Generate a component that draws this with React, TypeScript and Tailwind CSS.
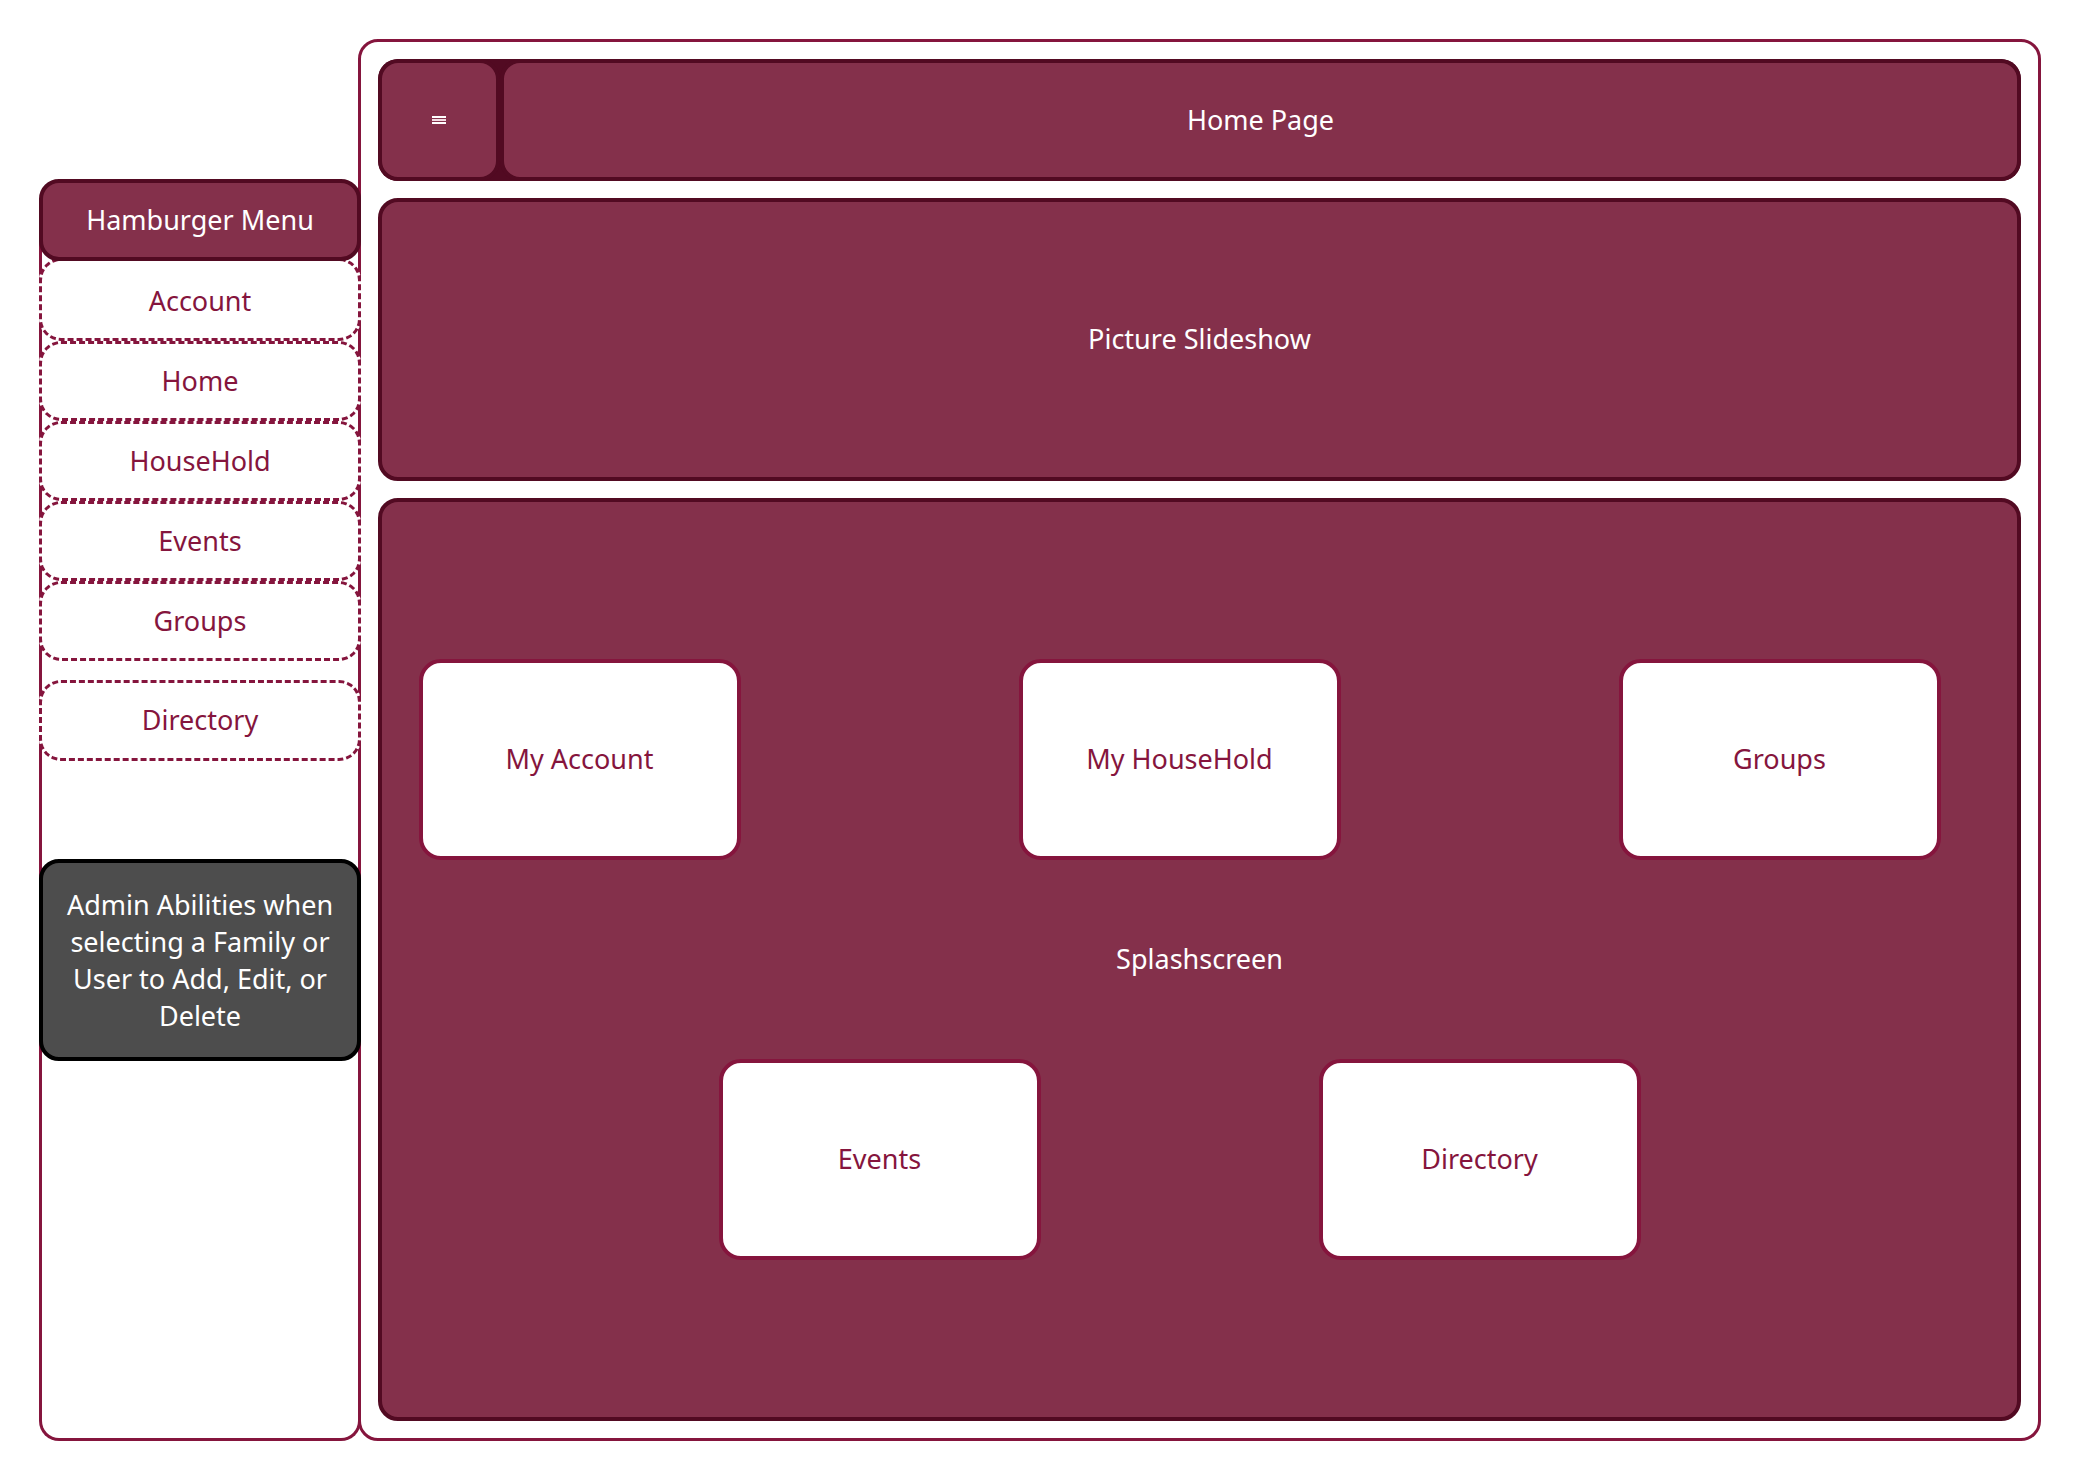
import React from 'react'

const menuItems = ['Account', 'Home', 'HouseHold', 'Events', 'Groups']

function MenuItem({ label, className = '' }: { label: string; className?: string }) {
  return (
    <div
      className={`-mx-[3px] h-[80px] flex items-center justify-center bg-white border-[3px] border-dashed border-[#85153d] rounded-[22px] text-[#85153d] text-[27px] ${className}`}
    >
      {label}
    </div>
  )
}

function Card({ label }: { label: string }) {
  return (
    <div className="w-[322px] h-[201px] shrink-0 flex items-center justify-center bg-white border-4 border-[#85153d] rounded-[22px] text-[#85153d] text-[27px]">
      {label}
    </div>
  )
}

export default function App() {
  return (
    <div
      className="w-[2081px] h-[1480px] bg-white flex pt-[39px] pb-[39px] pl-[39px] pr-[40px]"
      style={{ fontFamily: '"Noto Sans", "Open Sans", sans-serif' }}
    >
      {/* sidebar */}
      <div className="w-[322px] shrink-0 mt-[140px] flex flex-col relative z-10">
        <div className="h-[82px] flex items-center justify-center bg-[#84304b] border-4 border-[#520a22] rounded-[20px] text-white text-[27px] relative z-10">
          Hamburger Menu
        </div>
        <div className="flex-1 -mt-[20px] pt-[20px] flex flex-col border-[3px] border-t-0 border-[#85153d] rounded-b-[20px]">
          {menuItems.map((item, i) => (
            <MenuItem key={item} label={item} className={i === 0 ? '-mt-[3px] h-[83px] pt-[3px]' : ''} />
          ))}
          <MenuItem label="Directory" className="mt-[19px] h-[81px]" />
          <div className="-mx-[3px] mt-[98px] h-[202px] flex items-center justify-center bg-[#4d4d4d] border-4 border-black rounded-[20px] text-white text-[27px] leading-[37px] text-center px-4">
            Admin Abilities when selecting a Family or User to Add, Edit, or Delete
          </div>
        </div>
      </div>

      {/* main */}
      <div className="flex-1 -ml-[3px] flex flex-col gap-[17px] border-[3px] border-[#85153d] rounded-[20px] p-[17px]">
        <div className="h-[122px] flex bg-[#520a22] rounded-[20px] overflow-hidden">
          <div className="w-[122px] flex items-center justify-center bg-[#84304b] border-4 border-[#520a22] rounded-[20px]">
            <svg width="14" height="8" viewBox="0 0 14 8">
              <rect x="0" y="0" width="14" height="2" fill="#fff" />
              <rect x="0" y="3" width="14" height="2" fill="#f3dbe3" />
              <rect x="0" y="6" width="14" height="2" fill="#fff" />
            </svg>
          </div>
          <div className="flex-1 flex items-center justify-center bg-[#84304b] border-4 border-[#520a22] rounded-[20px] text-white text-[27px]">
            Home Page
          </div>
        </div>

        <div className="h-[283px] flex items-center justify-center bg-[#84304b] border-4 border-[#520a22] rounded-[20px] text-white text-[27px]">
          Picture Slideshow
        </div>

        <div className="flex-1 flex flex-col items-center justify-center bg-[#84304b] border-4 border-[#520a22] rounded-[20px]">
          <div className="flex gap-[278px] mr-[40px]">
            <Card label="My Account" />
            <Card label="My HouseHold" />
            <Card label="Groups" />
          </div>
          <div className="h-[199px] flex items-center justify-center text-white text-[27px]">
            Splashscreen
          </div>
          <div className="flex gap-[278px] mr-[40px]">
            <Card label="Events" />
            <Card label="Directory" />
          </div>
        </div>
      </div>
    </div>
  )
}
